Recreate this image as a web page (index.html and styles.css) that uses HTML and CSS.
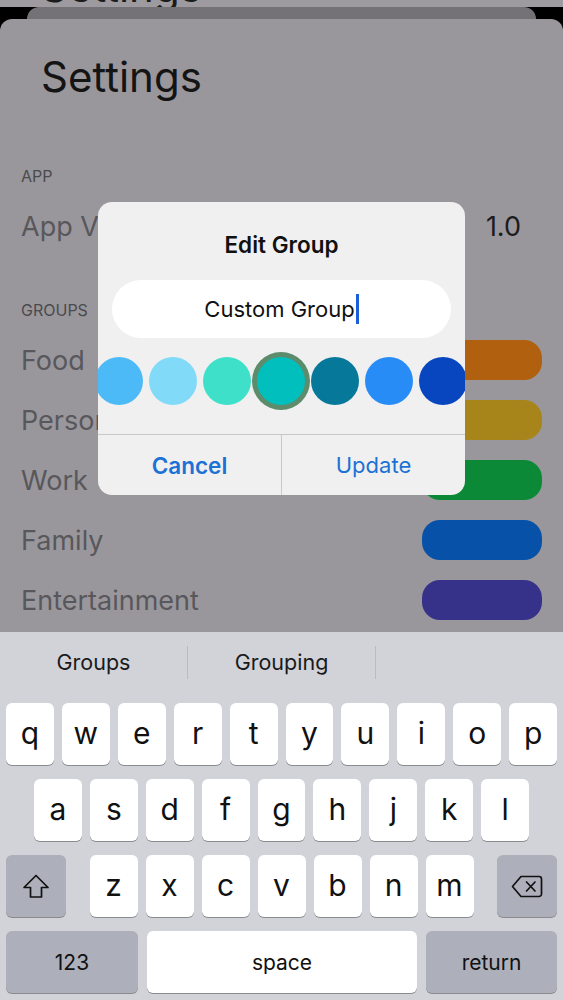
FILE: index.html
```html
<!DOCTYPE html>
<html lang="en">
<head>
    <meta charset="UTF-8">
    <meta name="viewport" content="width=device-width, initial-scale=1.0">
    <title>Settings - Edit Group</title>
    <link rel="stylesheet" href="styles.css">
</head>
<body>
    <div class="screen">
        <div class="prev-sheet"><span>Settings</span></div>
        <div class="stacked-sheet"></div>

        <div class="sheet">
            <h1 class="sheet-title">Settings</h1>

            <div class="section-head">APP</div>
            <div class="row first">
                <span class="row-label">App Version</span>
                <span class="row-value">1.0</span>
            </div>

            <div class="section-head groups">GROUPS</div>
            <div class="row first">
                <span class="row-label">Food</span>
                <span class="pill food"></span>
            </div>
            <div class="row">
                <span class="row-label">Personal</span>
                <span class="pill personal"></span>
            </div>
            <div class="row">
                <span class="row-label">Work</span>
                <span class="pill work"></span>
            </div>
            <div class="row">
                <span class="row-label">Family</span>
                <span class="pill family"></span>
            </div>
            <div class="row">
                <span class="row-label">Entertainment</span>
                <span class="pill entertainment"></span>
            </div>
        </div>

        <!-- alert over the dimmed sheet -->
        <div class="dialog">
            <div class="dialog-title">Edit Group</div>
            <div class="field">Custom Group<span class="caret"></span></div>
            <div class="swatches">
                <span class="swatch c1"></span>
                <span class="swatch c2"></span>
                <span class="swatch c3"></span>
                <span class="swatch c4 selected"></span>
                <span class="swatch c5"></span>
                <span class="swatch c6"></span>
                <span class="swatch c7"></span>
            </div>
            <div class="actions">
                <button type="button" class="action cancel">Cancel</button>
                <button type="button" class="action">Update</button>
            </div>
        </div>

        <div class="keyboard">
            <div class="suggest">
                <div class="suggest-item">Groups</div>
                <div class="suggest-sep"></div>
                <div class="suggest-item">Grouping</div>
                <div class="suggest-sep"></div>
                <div class="suggest-item"></div>
            </div>
            <div class="keys">
                <div class="key-row">
                    <span class="key">q</span><span class="key">w</span><span class="key">e</span><span class="key">r</span><span class="key">t</span><span class="key">y</span><span class="key">u</span><span class="key">i</span><span class="key">o</span><span class="key">p</span>
                </div>
                <div class="key-row inset">
                    <span class="key">a</span><span class="key">s</span><span class="key">d</span><span class="key">f</span><span class="key">g</span><span class="key">h</span><span class="key">j</span><span class="key">k</span><span class="key">l</span>
                </div>
                <div class="key-row split">
                    <span class="key mod wide">
                        <svg width="28" height="25" viewBox="0 0 28 25" fill="none" stroke="#111" stroke-width="1.7" stroke-linejoin="round">
                            <path d="M14 1.5 L2 13.5 H8.5 V23 H19.5 V13.5 H26 Z"/>
                        </svg>
                    </span>
                    <div class="letter-group">
                        <span class="key">z</span><span class="key">x</span><span class="key">c</span><span class="key">v</span><span class="key">b</span><span class="key">n</span><span class="key">m</span>
                    </div>
                    <span class="key mod wide">
                        <svg width="32" height="23" viewBox="0 0 32 23" fill="none" stroke="#111" stroke-width="1.7" stroke-linejoin="round" stroke-linecap="round">
                            <path d="M10 1.5 H28 a2.5 2.5 0 0 1 2.5 2.5 V19 a2.5 2.5 0 0 1 -2.5 2.5 H10 L1.5 11.5 Z"/>
                            <path d="M15.5 7 L24 16 M24 7 L15.5 16"/>
                        </svg>
                    </span>
                </div>
                <div class="key-row bottom">
                    <span class="key mod small-text num">123</span>
                    <span class="key small-text space">space</span>
                    <span class="key mod small-text ret">return</span>
                </div>
            </div>
        </div>
    </div>
</body>
</html>
```

FILE: styles.css
```css
body {
    margin: 0;
    width: 563px;
    height: 1000px;
    overflow: hidden;
    background-color: #000;
    font-family: Inter, "Noto Sans", "Liberation Sans", sans-serif;
}
.screen {
    position: relative;
    height: 1000px;
    display: flex;
    flex-direction: column;
}
.prev-sheet {
    height: 7px;
    background-color: #9d9b9f;
    overflow: hidden;
    padding-left: 41px;
}
.prev-sheet span {
    display: block;
    font-size: 42px;
    line-height: 42px;
    margin-top: -34px;
    color: #1b1b1b;
}
.stacked-sheet {
    height: 12px;
    margin: 0 27px;
    background-color: #747276;
    border-radius: 12px 12px 0 0;
}
.sheet {
    flex: 1;
    background-color: #99979b;
    border-radius: 12px 12px 0 0;
    overflow: hidden;
}
.sheet-title {
    margin: 30px 0 0 41px;
    font-size: 42px;
    line-height: 56px;
    font-weight: 400;
    color: #141414;
}
.section-head {
    margin-top: 61px;
    padding: 0 21px;
    font-size: 16px;
    line-height: 20px;
    color: #4b4a4e;
}
.section-head.groups {
    margin-top: 44px;
}
.row {
    height: 60px;
    padding: 0 21px;
    display: flex;
    align-items: center;
    justify-content: space-between;
}
.row.first {
    margin-top: 10px;
}
.row-label {
    font-size: 27px;
    color: #58575b;
}
.row-value {
    margin-right: 21px;
    font-size: 27px;
    color: #1c1c1c;
}
.pill {
    width: 120px;
    height: 40px;
    border-radius: 18px;
}
.food { background-color: #b0600f; }
.personal { background-color: #a8851a; }
.work { background-color: #0b8937; }
.family { background-color: #0751a8; }
.entertainment { background-color: #373289; }

/* alert */
.dialog {
    position: absolute;
    top: 202px;
    left: 98px;
    width: 367px;
    height: 293px;
    border-radius: 14px;
    background-color: #f0f0f0;
    overflow: hidden;
    display: flex;
    flex-direction: column;
}
.dialog-title {
    margin-top: 30px;
    text-align: center;
    font-size: 22.5px;
    line-height: 26px;
    font-weight: 600;
    color: #111;
}
.field {
    margin: 22px 14px 0;
    height: 58px;
    border-radius: 29px;
    background-color: #fff;
    display: flex;
    align-items: center;
    justify-content: center;
    font-size: 22px;
    color: #111;
}
.caret {
    display: inline-block;
    width: 3px;
    height: 30px;
    margin-left: 1px;
    background-color: #1b5fd9;
}
.swatches {
    margin: 19px 0 0 -3px;
    height: 48px;
    display: flex;
    gap: 6px;
}
.swatch {
    flex: 0 0 48px;
    height: 48px;
    border-radius: 50%;
}
.swatch.selected {
    box-shadow: 0 0 0 5px #5c8c6c;
}
.c1 { background-color: #4cbaf6; }
.c2 { background-color: #80daf8; }
.c3 { background-color: #3fe0c9; }
.c4 { background-color: #00bfbc; }
.c5 { background-color: #067899; }
.c6 { background-color: #288cf7; }
.c7 { background-color: #0746bf; }
.actions {
    margin-top: auto;
    height: 60px;
    border-top: 1px solid #c8c8ca;
    display: flex;
}
.action {
    flex: 1;
    border: none;
    background: none;
    padding: 0;
    font-family: inherit;
    font-size: 22px;
    color: #1c72d4;
}
.action + .action {
    border-left: 1px solid #c8c8ca;
}
.action.cancel {
    font-size: 22.5px;
    font-weight: 600;
}

/* keyboard */
.keyboard {
    height: 368px;
    background-color: #d1d3d9;
}
.suggest {
    height: 60px;
    display: flex;
    align-items: center;
}
.suggest-item {
    flex: 1;
    text-align: center;
    font-size: 21.5px;
    color: #1a1a1a;
}
.suggest-sep {
    width: 1px;
    height: 33px;
    background-color: #b9bbc2;
}
.keys {
    padding: 11px 6px 7px;
    display: flex;
    flex-direction: column;
    gap: 14px;
}
.key-row {
    height: 62px;
    display: flex;
    gap: 8px;
}
.key-row.inset {
    padding: 0 28px;
}
.key-row.split {
    justify-content: space-between;
}
.key-row.bottom {
    gap: 9px;
}
.letter-group {
    display: flex;
    gap: 8px;
}
.key {
    flex: 1;
    height: 62px;
    border-radius: 6px;
    background-color: #fff;
    box-shadow: 0 1px 0 #8a8b8f;
    display: flex;
    align-items: center;
    justify-content: center;
    font-size: 30px;
    color: #111;
    padding-bottom: 3px;
    box-sizing: border-box;
}
.letter-group .key {
    flex: 0 0 48px;
}
.key.mod {
    background-color: #adb0bb;
}
.key.wide {
    flex: 0 0 60px;
    padding-bottom: 0;
}
.key.small-text {
    font-size: 21px;
    padding-bottom: 0;
}
.key.num {
    flex: 0 0 132px;
}
.key.ret {
    flex: 0 0 131px;
}
```
